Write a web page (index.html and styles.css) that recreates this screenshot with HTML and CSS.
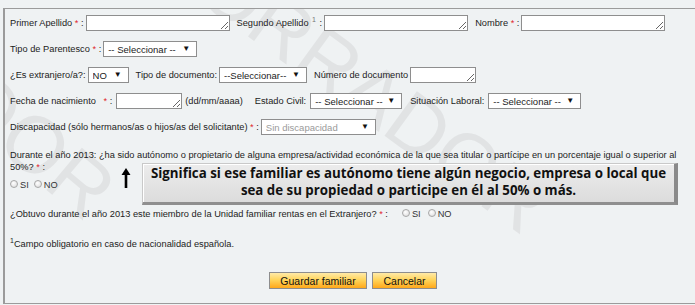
FILE: index.html
```html
<!DOCTYPE html>
<html lang="es">
<head>
    <meta charset="UTF-8">
    <meta name="viewport" content="width=device-width, initial-scale=1.0">
    <title>Datos del familiar</title>
    <link rel="stylesheet" href="styles.css">
</head>
<body>
    <div class="frame">
        <div class="watermark wm-main">BORRADOR</div>
        <div class="watermark wm-left">BORRADOR</div>

        <form class="familiar">
            <div class="row">
                <label>Primer Apellido <span class="req">*</span> :</label>
                <textarea class="field w-name"></textarea>
                <label>Segundo Apellido <sup class="note">1</sup> :</label>
                <textarea class="field w-name"></textarea>
                <label>Nombre <span class="req">*</span> :</label>
                <textarea class="field w-name"></textarea>
            </div>

            <div class="row">
                <label>Tipo de Parentesco <span class="req">*</span> :</label>
                <span class="select w-93"><select><option>-- Seleccionar --</option></select></span>
            </div>

            <div class="row">
                <label>¿Es extranjero/a?:</label>
                <span class="select w-40"><select><option>NO</option></select></span>
                <label>Tipo de documento:</label>
                <span class="select w-87"><select><option>--Seleccionar--</option></select></span>
                <label>Número de documento</label>
                <textarea class="field w-66"></textarea>
            </div>

            <div class="row row-fecha">
                <label>Fecha de nacimiento <span class="req wide">*</span> :</label>
                <textarea class="field w-65"></textarea>
                <span class="hint">(dd/mm/aaaa)</span>
                <label>Estado Civil:</label>
                <span class="select w-91"><select><option>-- Seleccionar --</option></select></span>
                <label>Situación Laboral:</label>
                <span class="select w-92"><select><option>-- Seleccionar --</option></select></span>
            </div>

            <div class="row">
                <label>Discapacidad (sólo hermanos/as o hijos/as del solicitante) <span class="req">*</span> :</label>
                <span class="select w-114 muted"><select><option>Sin discapacidad</option></select></span>
            </div>

            <p class="question">Durante el año 2013: ¿ha sido autónomo o propietario de alguna empresa/actividad económica de la que sea titular o partícipe en un porcentaje igual o superior al 50%? <span class="req">*</span> :</p>
            <div class="radios first">
                <label><input type="radio" name="autonomo">SI</label>
                <label><input type="radio" name="autonomo">NO</label>
            </div>

            <div class="row row-rentas">
                <span>¿Obtuvo durante el año 2013 este miembro de la Unidad familiar rentas en el Extranjero? <span class="req">*</span> :</span>
                <div class="radios">
                    <label><input type="radio" name="rentas">SI</label>
                    <label><input type="radio" name="rentas">NO</label>
                </div>
            </div>

            <p class="footnote"><sup>1</sup>Campo obligatorio en caso de nacionalidad española.</p>

            <div class="actions">
                <button type="button" class="btn btn-save">Guardar familiar</button>
                <button type="button" class="btn btn-cancel">Cancelar</button>
            </div>
        </form>

        <svg class="arrow" width="10" height="20" viewBox="0 0 10 20">
            <path d="M5 0 L9.5 7 L6.3 7 L6.3 20 L3.7 20 L3.7 7 L0.5 7 Z" fill="#000"/>
        </svg>
        <div class="callout">
            Significa si ese familiar es autónomo tiene algún negocio, empresa o local que<br>
            sea de su propiedad o participe en él al 50% o más.
        </div>
    </div>
</body>
</html>
```

FILE: styles.css
```css
body {
    margin: 0;
    background: #eff2f3;
    font-family: 'Liberation Sans', Arial, sans-serif;
    font-size: 9.25px;
    color: #222;
    overflow: hidden;
}
.frame {
    position: relative;
    margin: 8px 0 0 3px;
    height: 294px;
    border-top: 1px solid #9b9b9b;
    border-bottom: 1px solid #9b9b9b;
    border-left: 2px solid #9b9b9b;
    overflow: hidden;
}
.watermark {
    position: absolute;
    font-family: 'Liberation Sans', Arial, sans-serif;
    font-size: 80px;
    line-height: 92px;
    color: #e1e3e4;
    white-space: nowrap;
    transform-origin: 0 50%;
}
.wm-main {
    left: 160px;
    top: -112px;
    transform: rotate(36deg);
}
.wm-left {
    left: -256px;
    top: -150px;
    transform: rotate(40deg);
}
.familiar {
    position: relative;
    z-index: 1;
    padding: 6px 0 0 5px;
}
.row {
    display: flex;
    align-items: center;
    height: 16px;
    margin-top: 10px;
    white-space: nowrap;
}
.row > * {
    flex: none;
}
.row:first-child {
    margin-top: 0;
}
.row label,
.row .hint {
    margin-right: 2px;
}
.row .field,
.row .select,
.row .hint {
    margin-right: 7px;
}
.req {
    color: #e0242a;
}
.req.wide {
    margin-left: 5px;
}
sup {
    font-size: 7px;
    vertical-align: 4px;
    line-height: 0;
}
.note {
    color: #777;
    margin: 0 1px;
}
.field {
    box-sizing: border-box;
    height: 16px;
    margin: 0;
    padding: 0;
    border: 1px solid #8e8e8e;
    background: #fff;
    resize: both;
    font: inherit;
}
.w-name { width: 144px; }
.w-66 { width: 66px; }
.w-65 { width: 66px; }
.row-fecha .field {
    margin-right: 3px;
}
.row-fecha .hint {
    margin-right: 12px;
}
.row-fecha label {
    margin-right: 4px;
}
.row-fecha .select {
    margin-right: 8px;
}
.select {
    position: relative;
    display: inline-block;
    box-sizing: border-box;
    height: 16px;
    border: 1px solid #8e8e8e;
    background: #fff;
}
.select select {
    appearance: none;
    -webkit-appearance: none;
    width: 100%;
    height: 14px;
    border: none;
    outline: none;
    background: transparent;
    padding: 0 0 0 4px;
    font: inherit;
    font-size: 9.5px;
    color: #222;
}
.select::after {
    content: '▼';
    position: absolute;
    right: 6px;
    top: 2px;
    font-size: 8px;
    color: #111;
    pointer-events: none;
}
.muted select {
    color: #9a9a9a;
}
.w-40 { width: 41px; }
.w-87 { width: 88px; }
.w-91 { width: 92px; }
.w-92 { width: 93px; }
.w-93 { width: 94px; }
.w-114 { width: 115px; }
.question {
    margin: 14px 0 0;
    line-height: 12px;
    padding-right: 10px;
}
.radios {
    display: flex;
    gap: 5px;
    align-items: center;
}
.radios.first {
    margin-top: 6px;
    height: 12px;
}
.radios label {
    display: flex;
    align-items: center;
    gap: 1px;
    color: #333;
}
.radios input {
    appearance: none;
    -webkit-appearance: none;
    width: 8px;
    height: 8px;
    margin: 0 1px 2px 0;
    border: 1px solid #a7a7a7;
    border-radius: 50%;
    background: radial-gradient(circle at 40% 35%, #fff, #d9d9d9);
}
.row-rentas {
    margin-top: 15px;
}
.row-rentas .radios {
    margin-left: 14px;
}
.footnote {
    margin: 16px 0 0;
    line-height: 12px;
}
.actions {
    display: flex;
    gap: 5px;
    margin-top: 22px;
    padding-left: 259px;
}
.btn {
    box-sizing: border-box;
    height: 17px;
    padding: 0;
    border: 1px solid #8d8d8d;
    background: linear-gradient(#ffeaa8 0%, #ffd55c 45%, #ffa81a 100%);
    font-family: 'Liberation Sans', Arial, sans-serif;
    font-size: 10.5px;
    white-space: nowrap;
    color: #111;
    cursor: pointer;
}
.btn-save { width: 98px; }
.btn-cancel { width: 65px; }
.arrow {
    position: absolute;
    z-index: 2;
    left: 116px;
    top: 159px;
}
.callout {
    position: absolute;
    z-index: 2;
    left: 137px;
    top: 154px;
    width: 536px;
    height: 42px;
    box-sizing: border-box;
    padding-top: 1px;
    background: linear-gradient(#ececec, #dcdcdc);
    border: 1px solid #c9c9c9;
    border-right: 4px solid #8a8a8a;
    border-bottom: 3px solid #8f8f8f;
    box-shadow: inset 1px 1px 0 #fff;
    font-family: 'Open Sans', sans-serif;
    font-weight: 700;
    font-size: 13.3px;
    line-height: 17px;
    text-align: center;
    color: #111;
    white-space: nowrap;
}
```
